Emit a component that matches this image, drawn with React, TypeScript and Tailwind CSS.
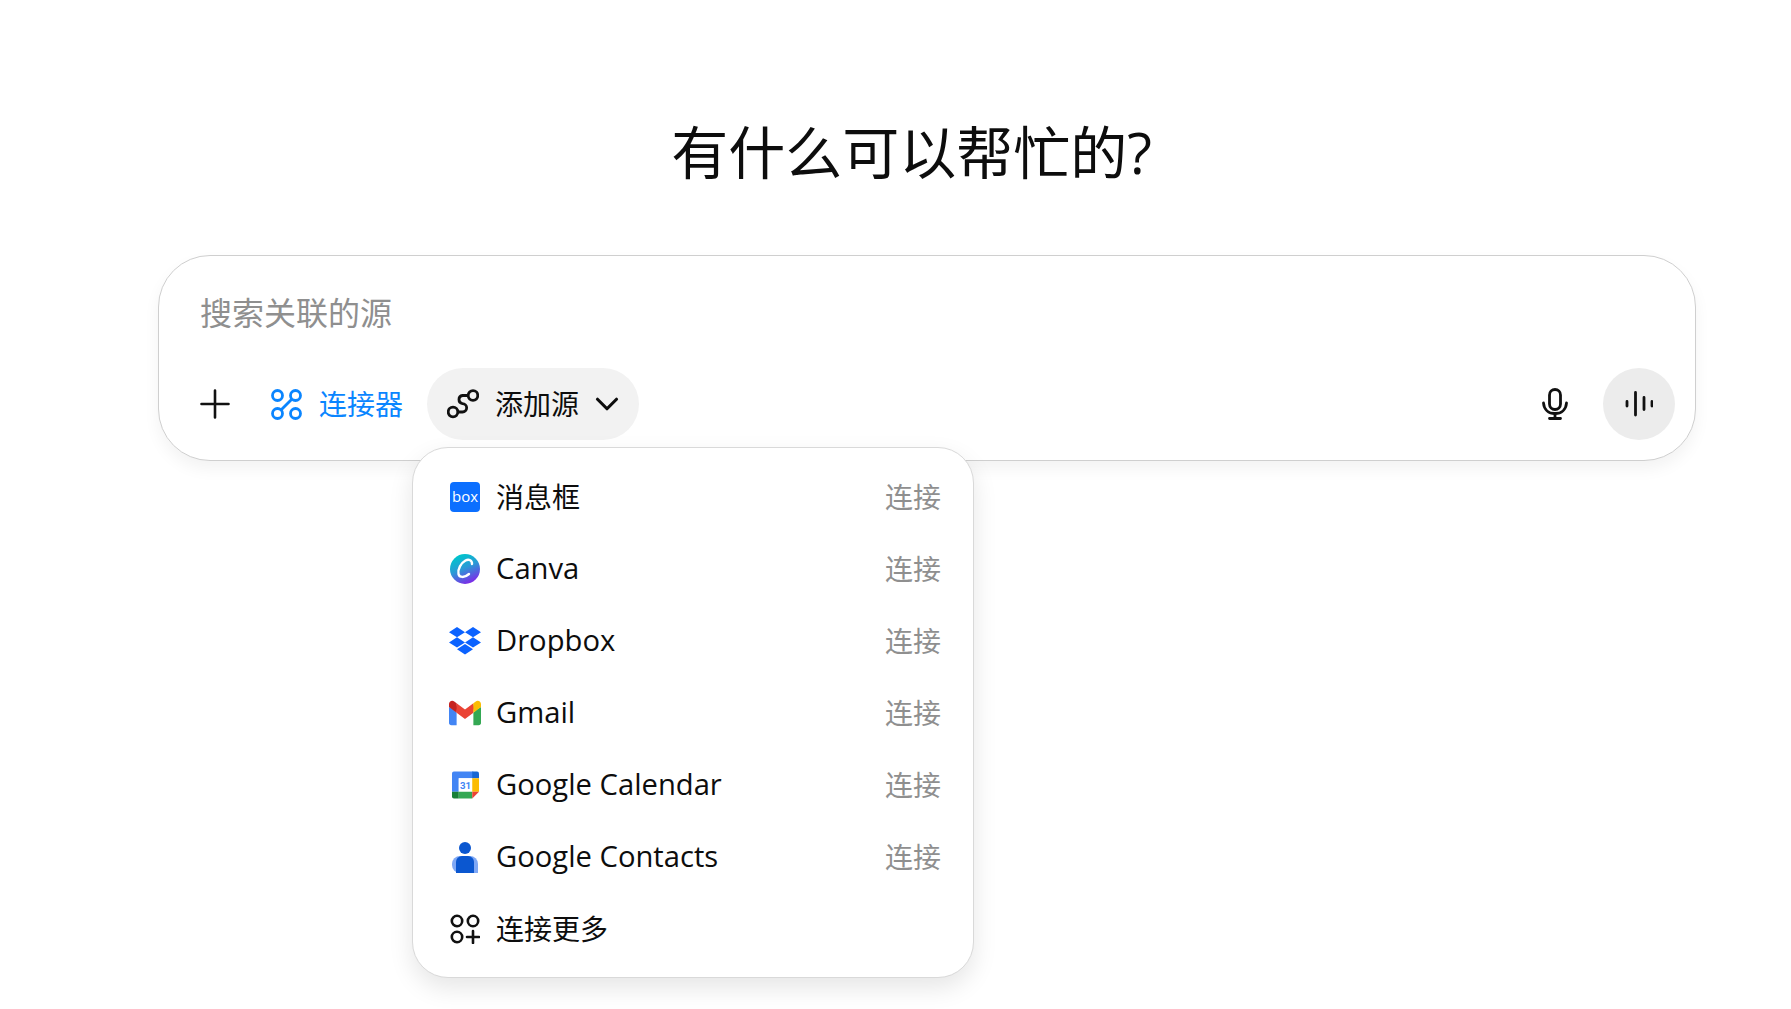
import { ChevronDown } from "lucide-react";

const font = { fontFamily: '"Open Sans", "Noto Sans CJK SC", sans-serif' };

const BoxIcon = () => (
  <div className="flex h-[30px] w-[30px] items-center justify-center rounded-[4px] bg-[#0b6fff] pb-[2px] text-[15px] leading-none text-white">
    box
  </div>
);

const CanvaIcon = () => (
  <svg width="30" height="30" viewBox="0 0 30 30">
    <defs>
      <linearGradient id="canva" x1="0.2" y1="0.1" x2="0.6" y2="1">
        <stop offset="0" stopColor="#00c4cc" />
        <stop offset="0.45" stopColor="#2a9ad6" />
        <stop offset="1" stopColor="#7d2ae8" />
      </linearGradient>
    </defs>
    <circle cx="15" cy="15" r="15" fill="url(#canva)" />
    <path
      d="M22 10c.2-3.500-3-5.500-6.500-3.500C11 9 7.500 15 8.500 20c.8 3.800 6 4 10.500 0"
      fill="none"
      stroke="#fff"
      strokeWidth="2.400"
      strokeLinecap="round"
    />
  </svg>
);

const DropboxIcon = () => (
  <svg width="32" height="28" viewBox="0 0 32 28" fill="#0b62ff">
    <path d="M8 0 0 5.200l8 5.100 8-5.100zM24 0l-8 5.200 8 5.100 8-5.100zM0 15.400l8 5.100 8-5.100-8-5.100zM24 10.300l-8 5.100 8 5.100 8-5.100zM8 22.200l8 5.300 8-5.300-8-5.100z" />
  </svg>
);

const GmailIcon = () => (
  <svg width="32" height="32" viewBox="3 3 42 42">
    <path fill="#34a853" d="M45 16.200l-5 2.750-5 4.750V40h7c1.657 0 3-1.343 3-3V16.200z" />
    <path fill="#4285f4" d="M3 16.200l3.614 1.710L13 23.700V40H6c-1.657 0-3-1.343-3-3V16.200z" />
    <polygon fill="#ea4335" points="35,11.200 24,19.450 13,11.200 12,17 13,23.700 24,31.950 35,23.700 36,17" />
    <path fill="#c5221f" d="M3 12.298V16.200l10 7.500V11.200L9.876 8.859C9.132 8.301 8.228 8 7.298 8 4.924 8 3 9.924 3 12.298z" />
    <path fill="#fbbc04" d="M45 12.298V16.200l-10 7.500V11.200l3.124-2.341C38.868 8.301 39.772 8 40.702 8 43.076 8 45 9.924 45 12.298z" />
  </svg>
);

const CalendarIcon = () => (
  <svg width="27" height="28" viewBox="0 0 28 28">
    <path fill="#4285f4" d="M2 0h20v7H7v14H0V2a2 2 0 0 1 2-2z" />
    <path fill="#1967d2" d="M21 0h5a2 2 0 0 1 2 2v5h-7z" />
    <rect x="7" y="7" width="14" height="14" fill="#fff" />
    <rect x="21" y="7" width="7" height="14" fill="#fbbc04" />
    <path fill="#34a853" d="M7 21h14v7H7z" />
    <path fill="#188038" d="M0 21h7v7H2a2 2 0 0 1-2-2z" />
    <path fill="#ea4335" d="M21 21h7l-7 7z" />
    <text x="14" y="18" textAnchor="middle" fontSize="10" fontWeight="700" fill="#4285f4" fontFamily="Roboto, sans-serif">
      31
    </text>
  </svg>
);

const ContactsIcon = () => (
  <svg width="26" height="31" viewBox="0 0 26 31">
    <circle cx="13" cy="6" r="6" fill="#0b57d0" />
    <path fill="#7fa8f5" d="M8 14h10a8 8 0 0 1 8 8v9H8a8 8 0 0 1-8-8v-1a8 8 0 0 1 8-8z" />
    <path fill="#0b57d0" d="M10 14h6a6 6 0 0 1 6 6v11H4V20a6 6 0 0 1 6-6z" />
  </svg>
);

const MoreIcon = () => (
  <svg width="30" height="30" viewBox="0 0 30 30" fill="none" stroke="#111" strokeWidth="2.600">
    <circle cx="7" cy="7" r="5.200" />
    <circle cx="23" cy="7" r="5.200" />
    <circle cx="7" cy="23" r="5.200" />
    <path d="M23 17v12M17 23h12" strokeLinecap="round" />
  </svg>
);

const PlusIcon = () => (
  <svg width="30" height="30" viewBox="0 0 30 30" fill="none" stroke="#111" strokeWidth="2.600" strokeLinecap="round">
    <path d="M15 1.500v27M1.500 15h27" />
  </svg>
);

const ConnectorIcon = () => (
  <svg width="31" height="31" viewBox="0 0 31 31" fill="none" stroke="#0a85ff" strokeWidth="2.800">
    <circle cx="6.500" cy="6.500" r="5" />
    <circle cx="24.500" cy="6.500" r="5" />
    <circle cx="6.500" cy="24.500" r="5" />
    <circle cx="24.500" cy="24.500" r="5" />
    <path d="M21 10 10 21" />
  </svg>
);

const SourceIcon = () => (
  <svg width="32" height="30" viewBox="0 0 32 30" fill="none" stroke="#111" strokeWidth="2.800">
    <circle cx="6" cy="23" r="4.800" />
    <circle cx="26" cy="6.500" r="4.800" />
    <path d="M10.800 23H15.500a4.150 4.150 0 0 0 0-8.300a4.150 4.150 0 0 1 0-8.200H21.200" />
  </svg>
);

const MicIcon = () => (
  <svg width="26" height="32" viewBox="0 0 26 32" fill="none" stroke="#111" strokeWidth="2.800" strokeLinecap="round">
    <rect x="7.500" y="1.500" width="11" height="20" rx="5.500" />
    <path d="M1.500 15c.5 6.500 5 10.500 11.500 10.500S24 21.500 24.500 15" />
    <path d="M13 25.500v5M7.500 30.500h11" />
  </svg>
);

const VoiceIcon = () => (
  <svg width="28" height="26" viewBox="0 0 28 26" fill="none" stroke="#111" strokeWidth="2.800" strokeLinecap="round">
    <path d="M2 10.500v4.500M10.500 1.500v22.500M19 6.500v12M27 10.500v4.500" />
  </svg>
);

const rows = [
  { name: "消息框", icon: <BoxIcon />, latin: false },
  { name: "Canva", icon: <CanvaIcon />, latin: true },
  { name: "Dropbox", icon: <DropboxIcon />, latin: true },
  { name: "Gmail", icon: <GmailIcon />, latin: true },
  { name: "Google Calendar", icon: <CalendarIcon />, latin: true },
  { name: "Google Contacts", icon: <ContactsIcon />, latin: true },
];

export default function App() {
  return (
    <main className="flex h-[1009px] flex-col items-center overflow-hidden bg-white text-[#0d0d0d]" style={font}>
      <h1 className="mt-[110px] ml-[32px] text-[57px] leading-[84px]">有什么可以帮忙的?</h1>

      <div className="relative mt-[61px] ml-[63px] h-[206px] w-[1538px] rounded-[52px] border border-[#cfcfcf] bg-white shadow-[0_8px_16px_rgba(0,0,0,0.05)]">
        <div className="pt-[33px] pl-[41px] text-[32px] leading-[48px] text-[#8f8f8f]">搜索关联的源</div>

        <div className="mt-[31px] flex h-[72px] items-center pr-[20px] pl-[41px]">
          <PlusIcon />
          <div className="ml-[41px] flex items-center gap-[17px] text-[28px] text-[#0a85ff]">
            <ConnectorIcon />
            <span>连接器</span>
          </div>
          <div className="ml-[24px] flex h-[72px] w-[212px] items-center rounded-full bg-[#f2f2f2] pl-[20px] text-[28px]">
            <SourceIcon />
            <span className="ml-[16px]">添加源</span>
            <ChevronDown size={38} strokeWidth={2} className="ml-[9px]" />
          </div>
          <div className="ml-auto flex items-center gap-[35px]">
            <MicIcon />
            <button className="flex h-[72px] w-[72px] items-center justify-center rounded-full bg-[#ececec]">
              <VoiceIcon />
            </button>
          </div>
        </div>

        <div className="absolute top-[191px] left-[253px] z-10 w-[562px] rounded-[36px] border border-[#d9d9d9] bg-white pt-[13px] pb-[12px] shadow-[0_10px_24px_rgba(0,0,0,0.1)]">
          {rows.map((row) => (
            <div key={row.name} className="flex h-[72px] items-center pr-[32px] pl-[36px] text-[28px]">
              <span className="flex w-[32px] justify-center">{row.icon}</span>
              <span className={row.latin ? "ml-[15px] flex-1 text-[29.2px]" : "ml-[15px] flex-1"}>{row.name}</span>
              <span className="text-[#8f8f8f]">连接</span>
            </div>
          ))}
          <div className="flex h-[72px] items-center pl-[36px] text-[28px]">
            <span className="flex w-[32px] justify-center">
              <MoreIcon />
            </span>
            <span className="ml-[15px]">连接更多</span>
          </div>
        </div>
      </div>
    </main>
  );
}
